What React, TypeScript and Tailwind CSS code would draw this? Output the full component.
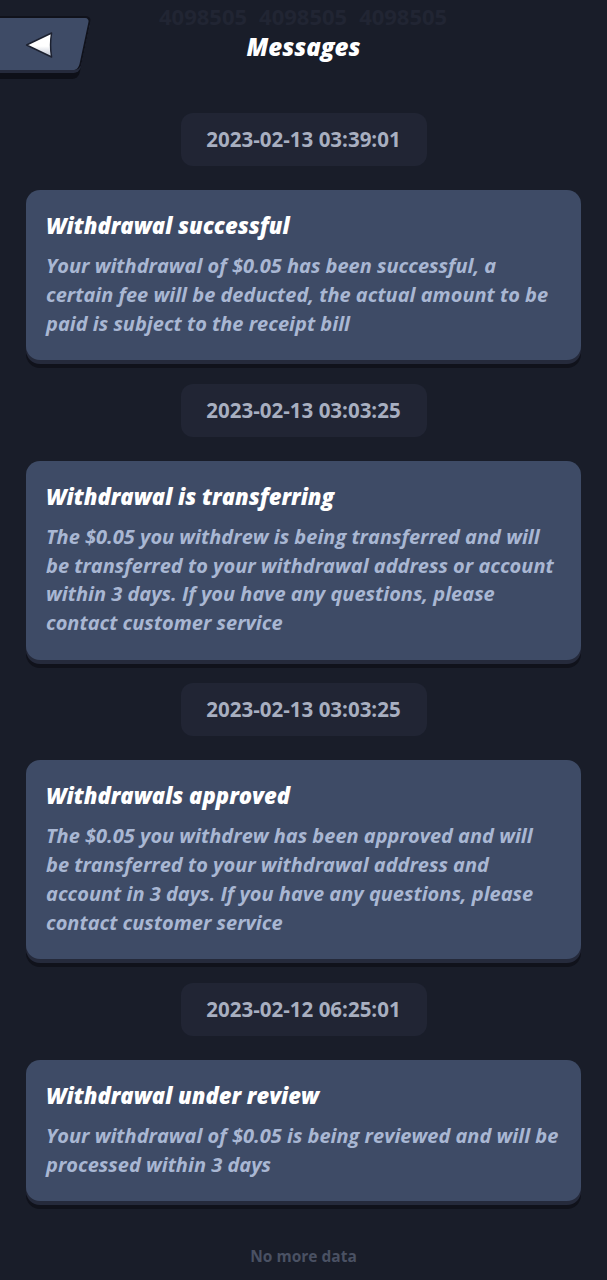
const messages = [
  {
    time: "2023-02-13 03:39:01",
    title: "Withdrawal successful",
    lines: [
      "Your withdrawal of $0.05 has been successful, a",
      "certain fee will be deducted, the actual amount to be",
      "paid is subject to the receipt bill",
    ],
  },
  {
    time: "2023-02-13 03:03:25",
    title: "Withdrawal is transferring",
    lines: [
      "The $0.05 you withdrew is being transferred and will",
      "be transferred to your withdrawal address or account",
      "within 3 days. If you have any questions, please",
      "contact customer service",
    ],
  },
  {
    time: "2023-02-13 03:03:25",
    title: "Withdrawals approved",
    lines: [
      "The $0.05 you withdrew has been approved and will",
      "be transferred to your withdrawal address and",
      "account in 3 days. If you have any questions, please",
      "contact customer service",
    ],
  },
  {
    time: "2023-02-12 06:25:01",
    title: "Withdrawal under review",
    lines: [
      "Your withdrawal of $0.05 is being reviewed and will be",
      "processed within 3 days",
    ],
  },
];

function BackButton() {
  return (
    <button className="relative ml-[-24px] flex h-[54px] w-[110px] -skew-x-[12deg] items-center justify-center rounded-r-[6px] rounded-b-[6px] border-t-2 border-r-2 border-[#10121b] bg-[#3e4b66] shadow-[0_3px_0_#252a3b,0_9px_0_#0e1018]">
      <svg width="30" height="30" viewBox="0 0 30 30" className="ml-[20px] mt-[2px] skew-x-[12deg]">
        <defs>
          <linearGradient id="arrow" x1="0" y1="0" x2="0" y2="1">
            <stop offset="0.55" stopColor="#ffffff" />
            <stop offset="1" stopColor="#b9c0cf" />
          </linearGradient>
        </defs>
        <path
          d="M2 15 L27 3 Q25 15 27 27 Z"
          fill="url(#arrow)"
          stroke="#1c2130"
          strokeWidth="1.5"
          strokeLinejoin="round"
        />
      </svg>
    </button>
  );
}

export default function App() {
  return (
    <div className="relative h-[1280px] overflow-hidden bg-[#191d29] font-['Open_Sans',sans-serif]">
      <div className="absolute left-[159px] top-[7px] flex gap-[12px] text-[22px] font-bold leading-[18px] text-[#212533]">
        <span>4098505</span>
        <span>4098505</span>
        <span>4098505</span>
      </div>

      <header className="grid h-[113px] grid-cols-[1fr_auto_1fr] items-start">
        <div className="pt-[16px]">
          <BackButton />
        </div>
        <h1 className="pt-[29px] text-[24px] font-extrabold italic leading-[36px] text-white">Messages</h1>
        <div />
      </header>

      <main className="flex flex-col items-center px-[26px]">
        {messages.map((m, i) => (
          <div key={i} className="flex w-full flex-col items-center">
            <div className="flex h-[53px] w-[246px] items-center justify-center rounded-[12px] bg-[#212534] text-[20.5px] font-bold text-[#a8afc0]">
              {m.time}
            </div>
            <article className="mb-[23.8px] mt-[24px] w-full rounded-[14px] bg-[#3e4b66] pb-[21.75px] pl-[20px] pr-[10px] pt-[20px] shadow-[0_4px_0_#252a3b,0_8px_0_#10121b]">
              <h2 className="text-[22px] font-extrabold italic leading-[30px] text-white">{m.title}</h2>
              <div className="mt-[12px] text-[20px] font-bold italic leading-[28.75px] text-[#a9b7d3]">
                {m.lines.map((line) => (
                  <p key={line} className="whitespace-nowrap">
                    {line}
                  </p>
                ))}
              </div>
            </article>
          </div>
        ))}
      </main>

      <p className="mt-[20px] text-center text-[15.5px] font-bold text-[#4a5163]">No more data</p>
    </div>
  );
}
